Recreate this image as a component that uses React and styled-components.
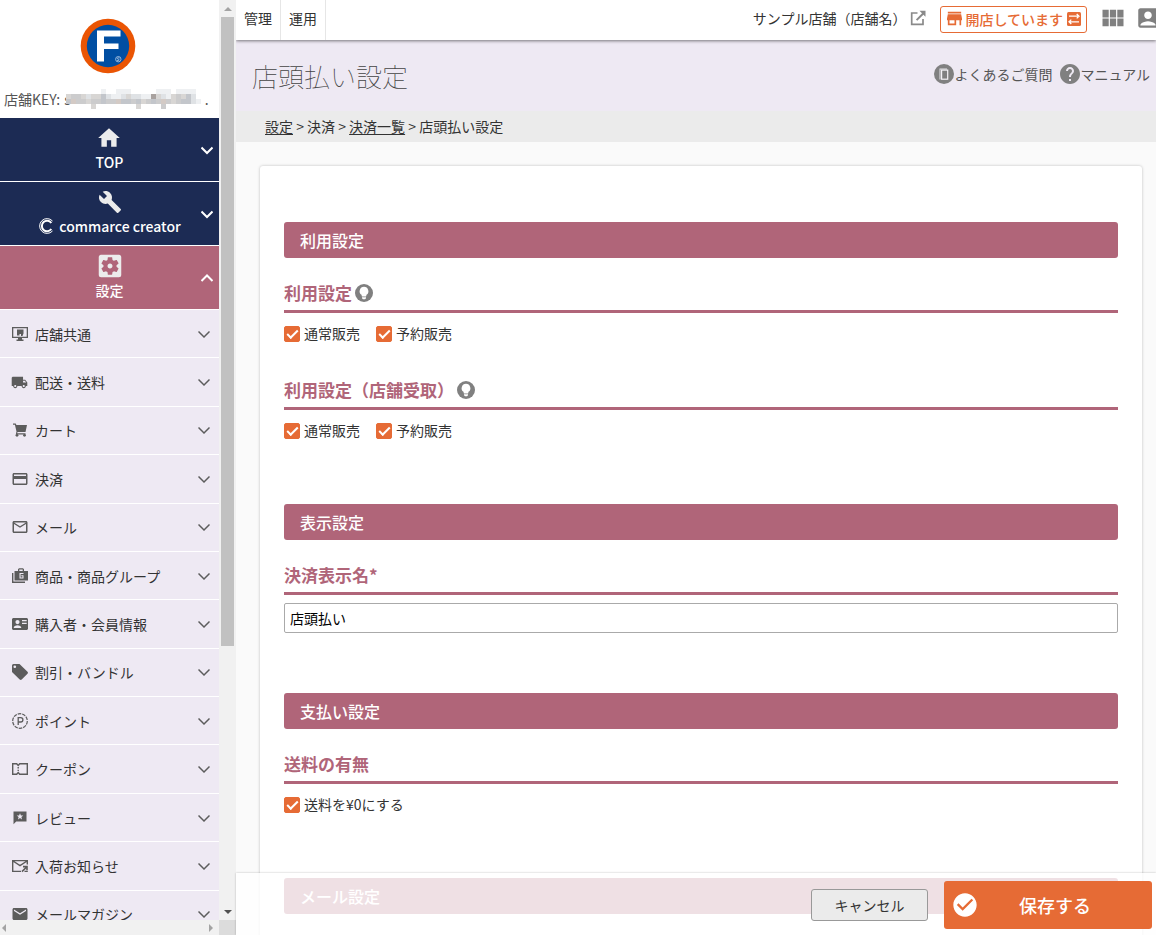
import React, { useState } from 'react'
import styled, { createGlobalStyle } from 'styled-components'
import {
  MdAccountBox,
  MdBuild,
  MdCheckCircle,
  MdHelp,
  MdHome,
  MdLocalShipping,
  MdMailOutline,
  MdEmail,
  MdPayment,
  MdSettingsApplications,
  MdStore,
  MdViewModule
} from 'react-icons/md'

const Colors = {
  navy: '#1c2b54',
  rose: '#b06579',
  lilac: '#eee9f3',
  orange: '#e66b35',
  grey: '#808080',
  text: '#333'
}

const GlobalStyle = createGlobalStyle`
  *, *::before, *::after {
    box-sizing: border-box;
  }

  body {
    margin: 0;
    overflow: hidden;
    color: ${Colors.text};
    background: #fafafa;
    font-family: 'Noto Sans CJK JP', 'Noto Sans', sans-serif;
    font-size: 14px;
    line-height: 22px;
  }

  button, input {
    font: inherit;
    color: inherit;
  }

  svg {
    display: block;
    flex: none;
  }
`

const Page = styled.div`
  display: grid;
  grid-template-columns: 236px 1fr;
  height: 100vh;
`

/* sidebar */

const Sidebar = styled.aside`
  display: grid;
  grid-template-columns: 1fr 17px;
  grid-template-rows: 1fr 15px;
  min-height: 0;
  background: #fff;
`

const SidebarContent = styled.div`
  min-height: 0;
  overflow: hidden;
`

const Brand = styled.div`
  display: flex;
  flex-direction: column;
  align-items: center;
  height: 118px;
  padding: 18px 3px 0 0;
  color: #555;
`

const ShopKey = styled.div`
  display: flex;
  align-items: center;
  align-self: stretch;
  gap: 4px;
  margin-top: 14px;
  padding-left: 4px;
`

const Masked = styled.span`
  display: flex;
  align-items: center;

  svg {
    margin-left: -5px;
  }
`

const MainItem = styled.button`
  display: grid;
  grid-template-columns: 24px 1fr 24px;
  align-items: center;
  justify-items: center;
  width: 100%;
  height: 64px;
  padding: 0;
  border: 0;
  border-bottom: 1px solid #fff;
  background: ${({ $active }) => ($active ? Colors.rose : Colors.navy)};
  color: #fff;
  font-weight: 500;
  cursor: pointer;
`

const MainLabel = styled.span`
  display: flex;
  flex-direction: column;
  grid-column: 2;
  align-items: center;
  padding-bottom: 2px;
`

const MainIcon = styled.span`
  display: flex;
  align-items: center;
  justify-content: center;
  height: 26px;
  color: #ececec;
`

const Caption = styled.span`
  display: flex;
  align-items: center;
  gap: 5px;
`

const SubList = styled.ul`
  display: grid;
  grid-auto-rows: 1fr;
  height: 629px;
  margin: 0;
  padding: 0;
  list-style: none;
`

const SubItem = styled.li`
  display: flex;
  border-bottom: 1px solid #fff;
  background: ${Colors.lilac};
`

const SubButton = styled.button`
  display: grid;
  grid-template-columns: 15px 1fr 12px;
  align-items: center;
  gap: 8px;
  width: 100%;
  padding: 0 9px 0 12px;
  border: 0;
  background: none;
  color: ${Colors.text};
  text-align: left;
  cursor: pointer;

  svg {
    justify-self: center;
    color: #5c5c5c;
  }
`

const VerticalBar = styled.div`
  display: flex;
  flex-direction: column;
  align-items: center;
  background: #f1f1f1;
`

const HorizontalBar = styled.div`
  display: flex;
  align-items: center;
  justify-content: space-between;
  padding: 0 4px 0 0;
  background: #f1f1f1;
`

const BarArrow = styled.span`
  display: flex;
  align-items: center;
  justify-content: center;
  height: 17px;
`

const BarTrack = styled.div`
  flex: 1;
  width: 13px;
`

const BarThumb = styled.div`
  height: 71%;
  background: #c1c1c1;
`

const BarCorner = styled.div`
  background: #dcdcdc;
`

/* main column */

const Main = styled.div`
  display: flex;
  flex-direction: column;
  min-width: 0;
  min-height: 0;
  overflow: hidden;
`

const TopBar = styled.header`
  position: relative;
  display: flex;
  flex: none;
  align-items: center;
  height: 40px;
  background: #fff;
  box-shadow: 0 1px 3px rgba(0, 0, 0, 0.5);
`

const Tab = styled.a`
  display: flex;
  align-items: center;
  height: 40px;
  padding: 0 8px 4px;
  border-right: 1px solid #e6e6e6;
  color: ${Colors.text};
  text-decoration: none;
`

const ShopLink = styled.a`
  display: flex;
  align-items: center;
  gap: 4px;
  margin-left: auto;
  padding-bottom: 4px;
  color: ${Colors.text};
  text-decoration: none;

  svg {
    color: #8a8a8a;
  }
`

const StatusButton = styled.button`
  display: flex;
  align-items: center;
  gap: 3px;
  height: 27px;
  margin: 0 12px 1px 14px;
  padding: 0 4px 2px 6px;
  border: 1px solid ${Colors.orange};
  border-radius: 3px;
  background: #fff;
  color: ${Colors.orange};
  font-weight: 500;
  cursor: pointer;
`

const IconButton = styled.button`
  display: flex;
  padding: 0 0 4px;
  border: 0;
  background: none;
  color: ${Colors.grey};
  cursor: pointer;

  & + & {
    margin: 0 -5px 0 8px;
  }
`

const TitleBar = styled.div`
  display: flex;
  flex: none;
  align-items: center;
  justify-content: space-between;
  height: 71px;
  padding: 0 6px 0 16px;
  background: ${Colors.lilac};
`

const Title = styled.h1`
  margin: 0;
  color: #444;
  font-size: 26px;
  font-weight: 100;
  line-height: 38px;
`

const HelpLinks = styled.div`
  display: flex;
  gap: 8px;
  padding-bottom: 3px;
`

const HelpLink = styled.a`
  display: flex;
  align-items: center;
  color: #555;
  text-decoration: none;

  svg {
    color: ${Colors.grey};
  }
`

const Breadcrumb = styled.nav`
  flex: none;
  height: 31px;
  padding: 4px 29px;
  background: #ebebeb;

  a {
    color: inherit;
    text-underline-offset: 2px;
  }
`

const Content = styled.main`
  flex: 1;
  min-height: 0;
  padding: 24px 14px 0 24px;
  overflow: hidden;
`

const Card = styled.form`
  padding: 56px 24px;
  border-radius: 3px;
  background: #fff;
  box-shadow: 0 0 3px rgba(0, 0, 0, 0.25);
`

const Section = styled.section`
  margin-bottom: 60px;
`

const SectionTitle = styled.h2`
  margin: 0 0 23px;
  padding: 6px 16px;
  border-radius: 3px;
  background: ${Colors.rose};
  color: #fff;
  font-size: 16px;
  font-weight: 500;
  line-height: 24px;
`

const Field = styled.div`
  & + & {
    margin-top: 31px;
  }
`

const FieldTitle = styled.h3`
  display: flex;
  align-items: center;
  gap: 3px;
  margin: 0 0 8px;
  padding-bottom: 5px;
  border-bottom: 3px solid ${Colors.rose};
  color: ${Colors.rose};
  font-size: 17px;
  font-weight: 700;
  line-height: 24px;

  svg {
    color: ${Colors.grey};
  }
`

const CheckRow = styled.div`
  display: flex;
  align-items: flex-start;
  gap: 16px;
  height: 26px;
  padding-top: 5px;
`

const CheckLabel = styled.label`
  display: flex;
  align-items: flex-start;
  gap: 4px;
  line-height: 14px;
`

const Checkbox = styled.input`
  display: grid;
  width: 16px;
  height: 16px;
  margin: 0;
  place-items: center;
  appearance: none;
  border: 1px solid ${Colors.orange};
  border-radius: 2px;

  &:checked {
    background: ${Colors.orange};
  }

  &:checked::before {
    width: 11px;
    height: 6px;
    border: solid #fff;
    border-width: 0 0 2px 2px;
    content: '';
    transform: translateY(-1px) rotate(-45deg);
  }
`

const TextInput = styled.input`
  display: block;
  width: 100%;
  height: 30px;
  padding: 0 5px;
  border: 1px solid #aaa;
  border-radius: 2px;
  background: #fff;
  color: #000;
`

const ActionBar = styled.footer`
  position: fixed;
  right: 0;
  bottom: 0;
  left: 236px;
  display: flex;
  align-items: center;
  justify-content: flex-end;
  gap: 16px;
  height: 62px;
  padding: 2px 4px 0 0;
  background: rgba(255, 255, 255, 0.8);
  box-shadow: 0 0 2px rgba(0, 0, 0, 0.25);
`

const CancelButton = styled.button`
  width: 117px;
  height: 32px;
  padding: 0;
  border: 1px solid #999;
  border-radius: 3px;
  background: #ebebeb;
  cursor: pointer;
`

const SaveButton = styled.button`
  display: grid;
  grid-template-columns: 28px 1fr;
  align-items: center;
  width: 208px;
  height: 48px;
  padding: 0 21px 0 7px;
  border: 0;
  border-radius: 3px;
  background: ${Colors.orange};
  color: #fff;
  font-size: 18px;
  font-weight: 500;
  cursor: pointer;
`

/* icons */

const Glyph = ({ size = 16, box = 16, children }) => (
  <svg width={size} height={size} viewBox={`0 0 ${box} ${box}`} fill="currentColor" aria-hidden="true">
    {children}
  </svg>
)

const Chevron = ({ up, width = 2 }) => (
  <svg width="12" height="12" viewBox="0 0 12 12" fill="none" stroke="currentColor" strokeWidth={width} aria-hidden="true">
    <path d={up ? 'M.5 9 6 3.5 11.5 9' : 'M.5 3.5 6 9l5.500-5.500'} />
  </svg>
)

const Logo = () => (
  <svg width="56" height="56" viewBox="0 0 56 56" role="img" aria-label="F">
    <circle cx="28" cy="28" r="27.300" fill="#ea5504" />
    <circle cx="28" cy="28" r="21.200" fill="#004ea2" />
    <path d="M17 12.500h23.500v6H24v7h14.500v5.500H24v12.500h-7z" fill="#fff" />
    <circle cx="38.300" cy="41.200" r="2.700" fill="none" stroke="#b9cde4" strokeWidth=".8" />
    <path d="M39.500 40c-2.400-1-2.800 1-1.200 1.200s1.200 2-1.200 1.200" fill="none" stroke="#b9cde4" strokeWidth=".8" />
  </svg>
)

// one letter per 5px cell, looked up in maskTones
const maskRows = [
  '.......a..aaa.....aaa.aaaa.',
  'cddcbccebaabcbbaagcbacdceb.',
  'efddcddeddfeedecdedfdcdeeba',
  '.....c........c....d.......'
]

const maskTones = { a: '#eef0f2', b: '#dfe2e5', c: '#d8d6d4', d: '#cccccd', e: '#c3c6cb', f: '#d3cac5', g: '#a9a29f' }

const Mask = () => (
  <svg width="139" height="20" viewBox="0 0 139 20" shapeRendering="crispEdges" aria-hidden="true">
    {maskRows.map((row, y) =>
      [...row].map((tone, x) =>
        tone === '.' ? null : <rect key={`${x}-${y}`} x={x * 5} y={y * 5} width="5" height="5" fill={maskTones[tone]} />
      )
    )}
  </svg>
)

const CreatorMark = () => (
  <Glyph size={16}>
    <g fill="none" stroke="currentColor">
      <path d="M14.500 3A7.400 7.400 0 1 0 14.500 13" strokeWidth="1" />
      <path d="M13.300 5A5.200 5.200 0 1 0 13.300 11" strokeWidth="2" />
    </g>
  </Glyph>
)

const MonitorIcon = () => (
  <Glyph>
    <path d="M0 1h16v11H10v1.500h1.500V15h-7v-1.500H6V12H0zm1.300 1.300v8.400h13.400V2.300z" fillRule="evenodd" />
    <path d="M5 3.500h6.500v4l-1 2.500H9V8H7.500v1.500H5z" />
  </Glyph>
)

const CartIcon = () => (
  <Glyph>
    <path d="M1 1.500h2.700l.7 1.500h10.600l-1.500 7H5.500l-.3 1.300h8.300v1.200H3.800L4.500 9.500 2.900 2.800H1z" />
    <circle cx="5" cy="13.300" r="1.400" />
    <circle cx="12.500" cy="13.300" r="1.400" />
  </Glyph>
)

const ProductsIcon = () => (
  <Glyph>
    <path d="M0 5h1.400v8.600H13V15H0z" />
    <path d="M2.500 3H6V1.200L7 .3h4l1 .9V3h4v9.500H2.500zM7.300 3h3.400V1.600H7.300zM11.500 5h-4v5.500h4V7.300H9.300v1h1.200v1.200H8.600V6h2.900z" fillRule="evenodd" />
  </Glyph>
)

const MemberIcon = () => (
  <Glyph>
    <path d="M1 2h14l1 1v10l-1 1H1l-1-1V3zm4.500 2a2 2 0 1 0 0 4.200 2 2 0 0 0 0-4.200zM1.700 12h7.600c0-3.600-7.600-3.600-7.600 0zM10 4v1.200h4.700V4zm0 2.700v1.200h4.700V6.700z" fillRule="evenodd" />
  </Glyph>
)

const TagIcon = () => (
  <Glyph>
    <path d="M0 1.500A1.500 1.500 0 0 1 1.500 0h6L15.500 7.700a1.500 1.500 0 0 1 0 2L9.700 15.500a1.500 1.500 0 0 1-2 0L0 8zm2.800-.1a1.300 1.300 0 1 0 0 2.700 1.300 1.300 0 0 0 0-2.700z" fillRule="evenodd" />
  </Glyph>
)

const PointIcon = () => (
  <Glyph>
    <circle cx="8" cy="8" r="7.300" fill="none" stroke="currentColor" strokeWidth="1.200" strokeDasharray="3.600 .95" />
    <path d="M6.200 12V4.600h2.500a2.200 2.200 0 0 1 0 4.400H6.200" fill="none" stroke="currentColor" strokeWidth="1.300" />
  </Glyph>
)

const CouponIcon = () => (
  <Glyph>
    <path d="M.7 2.700h4L6.200 4.500l1.500-1.800h7.600v10.600H7.700l-1.500-1.800-1.500 1.800h-4z" fill="none" stroke="currentColor" strokeWidth="1.400" />
    <path d="M5.500 6h1.400v1.400H5.500zM5.500 8.700h1.400v1.400H5.500z" />
  </Glyph>
)

const ReviewIcon = () => (
  <Glyph>
    <path d="M1.500 1.500h13v10H4.200l-2.700 2.700zM8 3.200 7.100 5.500l-2.400.1 1.900 1.500L6 9.400 8 8.100l2 1.300-.6-2.300 1.900-1.500-2.400-.1z" fillRule="evenodd" />
  </Glyph>
)

const ArrivalIcon = () => (
  <Glyph>
    <path d="M9 13.400H.7V2.600h14.600v4M1 3l7 4.700L15 3" fill="none" stroke="currentColor" strokeWidth="1.400" />
    <path d="M11 9.500V7.700h4.800v4.600h-1.600v-1.800l-3.700 3.700-1.100-1.100 3.600-3.600zM12.500 12.700h3.300V14h-3.300z" />
  </Glyph>
)

const ExternalIcon = () => (
  <Glyph>
    <path d="M7.500 3H1.700v11.300H13V9" fill="none" stroke="currentColor" strokeWidth="1.700" />
    <path d="M9.500.8h6v6L13.400 4.700 7.300 10.800 5.900 9.400 12 3.300z" />
  </Glyph>
)

const SwapIcon = () => (
  <Glyph>
    <rect x="1" y="1" width="14" height="14" rx="1.500" />
    <path d="M3 5.200h9M13 10.800H4M10.700 3l2.300 2.200-2.300 2.200M5.300 8.600 3 10.800 5.300 13" fill="none" stroke="#fff" strokeWidth="1.300" />
  </Glyph>
)

const FaqIcon = () => (
  <Glyph size={20} box={20}>
    <circle cx="10" cy="10" r="10" />
    <path d="M5.500 4.500h7.500v1H6.500v10h-1z" fill="#e4e2e6" />
    <path d="M7 5.500h7.300v10.300H7z" fill="#f4f2f6" />
    <path d="M8.200 6.700h4.900v7.900H8.200z" />
  </Glyph>
)

const BulbIcon = () => (
  <Glyph size={18} box={18}>
    <circle cx="9" cy="9" r="9" />
    <path d="M9 2.800a4.400 4.400 0 0 0-2.500 8l.4 1.700h4.200l.4-1.700A4.400 4.400 0 0 0 9 2.800zM7 13.300h4v1l-1 1H8l-1-1z" fill="#fff" />
  </Glyph>
)

const Triangle = ({ direction, color = '#a3a3a3' }) => {
  const paths = {
    up: 'M4 2 8 6H0z',
    down: 'M4 6 8 2H0z',
    left: 'M2 4l4-4v8z',
    right: 'M6 4 2 0v8z'
  }
  return (
    <svg width="8" height="8" viewBox="0 0 8 8" fill={color} aria-hidden="true">
      <path d={paths[direction]} />
    </svg>
  )
}

const subItems = [
  { label: '店舗共通', icon: <MonitorIcon /> },
  { label: '配送・送料', icon: <MdLocalShipping size={17} /> },
  { label: 'カート', icon: <CartIcon /> },
  { label: '決済', icon: <MdPayment size={18} /> },
  { label: 'メール', icon: <MdMailOutline size={18} /> },
  { label: '商品・商品グループ', icon: <ProductsIcon /> },
  { label: '購入者・会員情報', icon: <MemberIcon /> },
  { label: '割引・バンドル', icon: <TagIcon /> },
  { label: 'ポイント', icon: <PointIcon /> },
  { label: 'クーポン', icon: <CouponIcon /> },
  { label: 'レビュー', icon: <ReviewIcon /> },
  { label: '入荷お知らせ', icon: <ArrivalIcon /> },
  { label: 'メールマガジン', icon: <MdEmail size={18} /> }
]

const Navigation = () => (
  <nav>
    <MainItem type="button">
      <MainLabel>
        <MainIcon><MdHome size={26} /></MainIcon>
        <Caption>TOP</Caption>
      </MainLabel>
      <Chevron />
    </MainItem>
    <MainItem type="button">
      <MainLabel>
        <MainIcon><MdBuild size={24} /></MainIcon>
        <Caption><CreatorMark />commarce creator</Caption>
      </MainLabel>
      <Chevron />
    </MainItem>
    <MainItem type="button" $active aria-expanded="true">
      <MainLabel>
        <MainIcon><MdSettingsApplications size={30} /></MainIcon>
        <Caption>設定</Caption>
      </MainLabel>
      <Chevron up />
    </MainItem>
    <SubList>
      {subItems.map(({ label, icon }) => (
        <SubItem key={label}>
          <SubButton type="button">
            {icon}
            {label}
            <Chevron width={1.5} />
          </SubButton>
        </SubItem>
      ))}
    </SubList>
  </nav>
)

const Check = ({ children }) => (
  <CheckLabel>
    <Checkbox type="checkbox" defaultChecked />
    {children}
  </CheckLabel>
)

const SaleTypes = () => (
  <CheckRow>
    <Check>通常販売</Check>
    <Check>予約販売</Check>
  </CheckRow>
)

const App = () => {
  const [name, setName] = useState('店頭払い')

  return (
    <Page>
      <GlobalStyle />
      <Sidebar>
        <SidebarContent>
          <Brand>
            <Logo />
            <ShopKey>
              店舗KEY:
              <Masked>s<Mask />.</Masked>
            </ShopKey>
          </Brand>
          <Navigation />
        </SidebarContent>
        <VerticalBar>
          <BarArrow><Triangle direction="up" /></BarArrow>
          <BarTrack><BarThumb /></BarTrack>
          <BarArrow><Triangle direction="down" color="#505050" /></BarArrow>
        </VerticalBar>
        <HorizontalBar>
          <Triangle direction="left" />
          <Triangle direction="right" />
        </HorizontalBar>
        <BarCorner />
      </Sidebar>

      <Main>
        <TopBar>
          <Tab href="#admin">管理</Tab>
          <Tab href="#operation">運用</Tab>
          <ShopLink href="#shop">
            サンプル店舗（店舗名）
            <ExternalIcon />
          </ShopLink>
          <StatusButton type="button">
            <MdStore size={15} viewBox="3 3 18 18" />
            開店しています
            <SwapIcon />
          </StatusButton>
          <IconButton type="button" aria-label="アプリ"><MdViewModule size={28} /></IconButton>
          <IconButton type="button" aria-label="アカウント"><MdAccountBox size={26} /></IconButton>
        </TopBar>

        <TitleBar>
          <Title>店頭払い設定</Title>
          <HelpLinks>
            <HelpLink href="#faq"><FaqIcon />よくあるご質問</HelpLink>
            <HelpLink href="#manual"><MdHelp size={20} viewBox="2 2 20 20" />マニュアル</HelpLink>
          </HelpLinks>
        </TitleBar>

        <Breadcrumb>
          <a href="#settings">設定</a> &gt; 決済 &gt; <a href="#payments">決済一覧</a> &gt; 店頭払い設定
        </Breadcrumb>

        <Content>
          <Card onSubmit={(e) => e.preventDefault()}>
            <Section>
              <SectionTitle>利用設定</SectionTitle>
              <Field>
                <FieldTitle>利用設定<BulbIcon /></FieldTitle>
                <SaleTypes />
              </Field>
              <Field>
                <FieldTitle>利用設定（店舗受取）<BulbIcon /></FieldTitle>
                <SaleTypes />
              </Field>
            </Section>
            <Section>
              <SectionTitle>表示設定</SectionTitle>
              <Field>
                <FieldTitle><label htmlFor="display-name">決済表示名*</label></FieldTitle>
                <TextInput id="display-name" value={name} onChange={(e) => setName(e.target.value)} />
              </Field>
            </Section>
            <Section>
              <SectionTitle>支払い設定</SectionTitle>
              <Field>
                <FieldTitle>送料の有無</FieldTitle>
                <CheckRow>
                  <Check>送料を¥0にする</Check>
                </CheckRow>
              </Field>
            </Section>
            <Section>
              <SectionTitle>メール設定</SectionTitle>
            </Section>
          </Card>
        </Content>

        <ActionBar>
          <CancelButton type="button">キャンセル</CancelButton>
          <SaveButton type="button">
            <MdCheckCircle size={28} />
            保存する
          </SaveButton>
        </ActionBar>
      </Main>
    </Page>
  )
}

export default App
